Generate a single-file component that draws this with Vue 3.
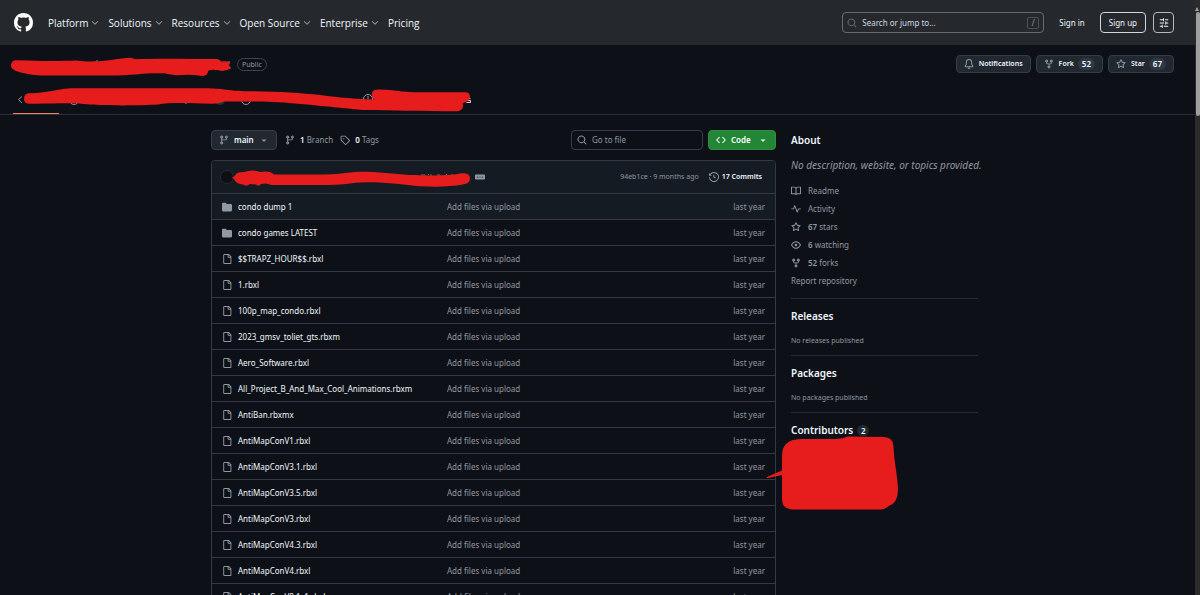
<script setup>
const nav = [
  { label: 'Platform', menu: true },
  { label: 'Solutions', menu: true },
  { label: 'Resources', menu: true },
  { label: 'Open Source', menu: true },
  { label: 'Enterprise', menu: true },
  { label: 'Pricing', menu: false },
]

const files = [
  'condo dump 1',
  'condo games LATEST',
  '$$TRAPZ_HOUR$$.rbxl',
  '1.rbxl',
  '100p_map_condo.rbxl',
  '2023_gmsv_toliet_gts.rbxm',
  'Aero_Software.rbxl',
  'All_Project_B_And_Max_Cool_Animations.rbxm',
  'AntiBan.rbxmx',
  'AntiMapConV1.rbxl',
  'AntiMapConV3.1.rbxl',
  'AntiMapConV3.5.rbxl',
  'AntiMapConV3.rbxl',
  'AntiMapConV4.3.rbxl',
  'AntiMapConV4.rbxl',
  'AntiMapConV8.1_1.rbxl',
].map((name, i) => ({ name, icon: i < 2 ? 'folder' : 'file' }))

const facts = [
  { icon: 'book', text: 'Readme' },
  { icon: 'pulse', text: 'Activity' },
  { icon: 'star', count: '67', text: 'stars' },
  { icon: 'eye', count: '6', text: 'watching' },
  { icon: 'fork', count: '52', text: 'forks' },
]

const icons = {
  github: 'M8 0c4.42 0 8 3.58 8 8a8.013 8.013 0 0 1-5.45 7.59c-.4.08-.55-.17-.55-.38 0-.27.01-1.13.01-2.2 0-.75-.25-1.23-.54-1.48 1.78-.2 3.65-.88 3.65-3.95 0-.88-.31-1.59-.82-2.15.08-.2.36-1.02-.08-2.12 0 0-.67-.22-2.2.82-.64-.18-1.32-.27-2-.27-.68 0-1.36.09-2 .27-1.53-1.03-2.2-.82-2.2-.82-.44 1.1-.16 1.92-.08 2.12-.51.56-.82 1.28-.82 2.15 0 3.06 1.86 3.75 3.64 3.95-.23.2-.44.55-.51 1.07-.46.21-1.61.55-2.33-.66-.15-.24-.6-.83-1.23-.82-.67.01-.27.38.01.53.34.19.73.9.82 1.13.16.45.68 1.31 2.69.94 0 .67.01 1.3.01 1.49 0 .21-.15.45-.55.38A7.995 7.995 0 0 1 0 8c0-4.42 3.58-8 8-8Z',
  chevron: 'M12.78 5.22a.749.749 0 0 1 0 1.06l-4.25 4.25a.749.749 0 0 1-1.06 0L3.22 6.28a.749.749 0 1 1 1.06-1.06L8 8.939l3.72-3.719a.749.749 0 0 1 1.06 0Z',
  search: 'M10.68 11.74a6 6 0 0 1-7.922-8.982 6 6 0 0 1 8.982 7.922l3.04 3.04a.749.749 0 0 1-.326 1.275.749.749 0 0 1-.734-.215ZM11.5 7a4.499 4.499 0 1 0-8.997 0A4.499 4.499 0 0 0 11.5 7Z',
  sliders: 'M15 2.75a.75.75 0 0 1-.75.75h-4a.75.75 0 0 1 0-1.5h4a.75.75 0 0 1 .75.75Zm-8.5.75v1.25a.75.75 0 0 0 1.5 0v-4a.75.75 0 0 0-1.5 0V2H1.75a.75.75 0 0 0 0 1.5H6.5Zm1.25 5.25a.75.75 0 0 0 0-1.5h-6a.75.75 0 0 0 0 1.5h6ZM15 8a.75.75 0 0 1-.75.75H11.5V10a.75.75 0 1 1-1.5 0V6a.75.75 0 0 1 1.5 0v1.25h2.75A.75.75 0 0 1 15 8Zm-9 5.25v-2a.75.75 0 0 0-1.5 0v1.25H1.75a.75.75 0 0 0 0 1.5H4.5v1.25a.75.75 0 0 0 1.5 0v-2Zm9 0a.75.75 0 0 1-.75.75h-6a.75.75 0 0 1 0-1.5h6a.75.75 0 0 1 .75.75Z',
  bell: 'M8 16a2 2 0 0 0 1.985-1.75c.017-.137-.097-.25-.235-.25h-3.5c-.138 0-.252.113-.235.25A2 2 0 0 0 8 16ZM3 5a5 5 0 0 1 10 0v2.947c0 .05.015.098.042.139l1.703 2.555A1.519 1.519 0 0 1 13.482 13H2.518a1.516 1.516 0 0 1-1.263-2.36l1.703-2.554A.255.255 0 0 0 3 7.947Zm5-3.5A3.5 3.5 0 0 0 4.5 5v2.947c0 .346-.102.683-.294.97l-1.703 2.556a.017.017 0 0 0-.003.01l.001.006c0 .002.002.004.004.006l.006.004.007.001h10.964l.007-.001.006-.004.004-.006.001-.007a.017.017 0 0 0-.003-.01l-1.703-2.554a1.745 1.745 0 0 1-.294-.97V5A3.5 3.5 0 0 0 8 1.5Z',
  fork: 'M5 5.372v.878c0 .414.336.75.75.75h4.5a.75.75 0 0 0 .75-.75v-.878a2.25 2.25 0 1 1 1.5 0v.878a2.25 2.25 0 0 1-2.25 2.25h-1.5v2.128a2.251 2.251 0 1 1-1.5 0V8.5h-1.5A2.25 2.25 0 0 1 3.5 6.25v-.878a2.25 2.25 0 1 1 1.5 0ZM5 3.25a.75.75 0 1 0-1.5 0 .75.75 0 0 0 1.5 0Zm6.75.75a.75.75 0 1 0 0-1.5.75.75 0 0 0 0 1.5Zm-3 8.75a.75.75 0 1 0-1.5 0 .75.75 0 0 0 1.5 0Z',
  star: 'M8 .25a.75.75 0 0 1 .673.418l1.882 3.815 4.21.612a.75.75 0 0 1 .416 1.279l-3.046 2.97.719 4.192a.751.751 0 0 1-1.088.791L8 12.347l-3.766 1.98a.75.75 0 0 1-1.088-.79l.72-4.194L.818 6.374a.75.75 0 0 1 .416-1.28l4.21-.611L7.327.668A.75.75 0 0 1 8 .25Zm0 2.445L6.615 5.5a.75.75 0 0 1-.564.41l-3.097.45 2.24 2.184a.75.75 0 0 1 .216.664l-.528 3.084 2.769-1.456a.75.75 0 0 1 .698 0l2.77 1.456-.53-3.084a.75.75 0 0 1 .216-.664l2.24-2.183-3.096-.45a.75.75 0 0 1-.564-.41L8 2.694Z',
  branch: 'M9.5 3.25a2.25 2.25 0 1 1 3 2.122V6A2.5 2.5 0 0 1 10 8.5H6a1 1 0 0 0-1 1v1.128a2.251 2.251 0 1 1-1.5 0V5.372a2.25 2.25 0 1 1 1.5 0v1.836A2.493 2.493 0 0 1 6 7h4a1 1 0 0 0 1-1v-.628A2.25 2.25 0 0 1 9.5 3.25Zm-6 0a.75.75 0 1 0 1.5 0 .75.75 0 0 0-1.5 0Zm8.25-.75a.75.75 0 1 0 0 1.5.75.75 0 0 0 0-1.5ZM4.25 12a.75.75 0 1 0 0 1.5.75.75 0 0 0 0-1.5Z',
  caret: 'm4.427 7.427 3.396 3.396a.25.25 0 0 0 .354 0l3.396-3.396A.25.25 0 0 0 11.396 7H4.604a.25.25 0 0 0-.177.427Z',
  tag: 'M1 7.775V2.75C1 1.784 1.784 1 2.75 1h5.025c.464 0 .91.184 1.238.513l6.25 6.25a1.75 1.75 0 0 1 0 2.474l-5.026 5.026a1.75 1.75 0 0 1-2.474 0l-6.25-6.25A1.752 1.752 0 0 1 1 7.775Zm1.5 0c0 .066.026.13.073.177l6.25 6.25a.25.25 0 0 0 .354 0l5.025-5.025a.25.25 0 0 0 0-.354l-6.25-6.25a.25.25 0 0 0-.177-.073H2.75a.25.25 0 0 0-.25.25ZM6 5a1 1 0 1 1 0 2 1 1 0 0 1 0-2Z',
  code: 'm11.28 3.22 4.25 4.25a.75.75 0 0 1 0 1.06l-4.25 4.25a.749.749 0 0 1-1.275-.326.749.749 0 0 1 .215-.734L13.94 8l-3.72-3.72a.749.749 0 0 1 .326-1.275.749.749 0 0 1 .734.215Zm-6.56 0a.751.751 0 0 1 1.042.018.751.751 0 0 1 .018 1.042L2.06 8l3.72 3.72a.749.749 0 0 1-.326 1.275.749.749 0 0 1-.734-.215L.47 8.53a.75.75 0 0 1 0-1.06Z',
  ellipsis: 'M0 5.75C0 4.784.784 4 1.75 4h12.5c.966 0 1.75.784 1.75 1.75v4.5A1.75 1.75 0 0 1 14.25 12H1.75A1.75 1.75 0 0 1 0 10.25ZM12 7a1 1 0 1 0 0 2 1 1 0 0 0 0-2ZM7 8a1 1 0 1 0 2 0 1 1 0 0 0-2 0ZM4 7a1 1 0 1 0 0 2 1 1 0 0 0 0-2Z',
  history: 'm.427 1.927 1.215 1.215a8.002 8.002 0 1 1-1.6 5.685.75.75 0 1 1 1.493-.154 6.5 6.5 0 1 0 1.18-4.458l1.358 1.358A.25.25 0 0 1 3.896 6H.25A.25.25 0 0 1 0 5.75V2.104a.25.25 0 0 1 .427-.177ZM7.75 4a.75.75 0 0 1 .75.75v2.992l2.028.812a.75.75 0 0 1-.557 1.392l-2.5-1A.751.751 0 0 1 7 8.25v-3.5A.75.75 0 0 1 7.75 4Z',
  folder: 'M1.75 1A1.75 1.75 0 0 0 0 2.75v10.5C0 14.216.784 15 1.75 15h12.5A1.75 1.75 0 0 0 16 13.25v-8.5A1.75 1.75 0 0 0 14.25 3H7.5a.25.25 0 0 1-.2-.1l-.9-1.2C6.07 1.26 5.55 1 5 1H1.75Z',
  file: 'M2 1.75C2 .784 2.784 0 3.75 0h6.586c.464 0 .909.184 1.237.513l2.914 2.914c.329.328.513.773.513 1.237v9.586A1.75 1.75 0 0 1 13.25 16h-9.5A1.75 1.75 0 0 1 2 14.25Zm1.75-.25a.25.25 0 0 0-.25.25v12.5c0 .138.112.25.25.25h9.5a.25.25 0 0 0 .25-.25V6h-2.75A1.75 1.75 0 0 1 9 4.25V1.5Zm6.75.062V4.25c0 .138.112.25.25.25h2.688l-.011-.013-2.914-2.914-.013-.011Z',
  book: 'M0 1.75A.75.75 0 0 1 .75 1h4.253c1.227 0 2.317.59 3 1.501A3.743 3.743 0 0 1 11.006 1h4.245a.75.75 0 0 1 .75.75v10.5a.75.75 0 0 1-.75.75h-4.507a2.25 2.25 0 0 0-1.591.659l-.622.621a.75.75 0 0 1-1.06 0l-.622-.621A2.25 2.25 0 0 0 5.258 13H.75a.75.75 0 0 1-.75-.75Zm7.251 10.324.004-5.073-.002-2.253A2.25 2.25 0 0 0 5.003 2.5H1.5v9h3.757a3.75 3.75 0 0 1 1.994.574ZM8.755 4.75l-.004 7.322a3.752 3.752 0 0 1 1.992-.572H14.5v-9h-3.495a2.25 2.25 0 0 0-2.25 2.25Z',
  pulse: 'M6 2c.306 0 .582.187.696.471L10 10.731l1.304-3.26A.751.751 0 0 1 12 7h3.25a.75.75 0 0 1 0 1.5h-2.742l-1.812 4.528a.751.751 0 0 1-1.392 0L6 4.77 4.696 8.03A.75.75 0 0 1 4 8.5H.75a.75.75 0 0 1 0-1.5h2.742l1.812-4.529A.751.751 0 0 1 6 2Z',
  eye: 'M8 2c1.981 0 3.671.992 4.933 2.078 1.27 1.091 2.187 2.345 2.637 3.023a1.62 1.62 0 0 1 0 1.798c-.45.678-1.367 1.932-2.637 3.023C11.67 13.008 9.981 14 8 14c-1.981 0-3.671-.992-4.933-2.078C1.797 10.83.88 9.576.43 8.898a1.62 1.62 0 0 1 0-1.798c.45-.677 1.367-1.931 2.637-3.022C4.33 2.992 6.019 2 8 2ZM1.679 7.932a.12.12 0 0 0 0 .136c.411.622 1.241 1.75 2.366 2.717C5.176 11.758 6.527 12.5 8 12.5c1.473 0 2.825-.742 3.955-1.715 1.124-.967 1.954-2.096 2.366-2.717a.12.12 0 0 0 0-.136c-.412-.621-1.242-1.75-2.366-2.717C10.824 4.242 9.473 3.5 8 3.5c-1.473 0-2.825.742-3.955 1.715-1.124.967-1.954 2.096-2.366 2.717ZM8 10a2 2 0 1 1-.001-3.999A2 2 0 0 1 8 10Z',
}
</script>

<template>
  <div class="page">
    <header class="topbar">
      <a href="#" class="logo" aria-label="Homepage"><svg viewBox="0 0 16 16"><path :d="icons.github" /></svg></a>
      <nav class="nav" aria-label="Global">
        <template v-for="n in nav" :key="n.label">
          <button v-if="n.menu" type="button">{{ n.label }}<svg class="icon chev" viewBox="0 0 16 16"><path :d="icons.chevron" /></svg></button>
          <a v-else href="#">{{ n.label }}</a>
        </template>
      </nav>
      <label class="search">
        <svg class="icon" viewBox="0 0 16 16"><path :d="icons.search" /></svg>
        <input type="text" placeholder="Search or jump to..." aria-label="Search or jump to" />
        <kbd>/</kbd>
      </label>
      <a href="#" class="signin">Sign in</a>
      <a href="#" class="signup">Sign up</a>
      <button type="button" class="appearance" aria-label="Appearance settings"><svg class="icon" viewBox="0 0 16 16"><path :d="icons.sliders" /></svg></button>
    </header>

    <section class="repo-head">
      <div class="title-row">
        <span class="visibility">Public</span>
        <div class="actions">
          <button type="button" class="btn small"><svg class="icon" viewBox="0 0 16 16"><path :d="icons.bell" /></svg>Notifications</button>
          <button type="button" class="btn small"><svg class="icon" viewBox="0 0 16 16"><path :d="icons.fork" /></svg>Fork<span class="counter">52</span></button>
          <button type="button" class="btn small"><svg class="icon" viewBox="0 0 16 16"><path :d="icons.star" /></svg>Star<span class="counter">67</span></button>
        </div>
      </div>
      <nav class="tabs" aria-label="Repository">
        <a href="#" class="tab" aria-label="Code" aria-current="page"></a>
      </nav>
      <svg class="marks head-marks" viewBox="0 45 480 70" aria-hidden="true">
        <g fill="none" stroke="#9198a1" stroke-width="1">
          <path d="M22 96.500L18.500 99.500L22 103" />
          <circle cx="368" cy="99" r="4.500" /><path d="M368 96v3" />
          <circle cx="246" cy="100" r="4.500" />
          <circle cx="74" cy="100" r="4.500" />
          <path d="M303 103.500h4M186 102v2" />
          <path d="M467 98.500h3.500M467 100.500h3.500v2h-4" stroke="#d1d7e0" />
        </g>
        <circle cx="220" cy="100" r="5" fill="#2a313c" />
        <path d="M229 61v3M230.500 68h-2M97 60v2" fill="none" stroke="#4493f8" />
        <path class="ink" d="M11 66C11 62 13 60.300 17 60.300C45 61.500 65 61 76 60.500C88 62 98 61.500 106 60.500C116 59.500 122 58 129 57.700Q134 57.500 134 59.300C160 58 190 59 216 59Q220 59 221 61.500Q227 60.500 230 62.500L229 65L231 68Q227 71 222 71L217 70Q208 69 208 72Q207 76 202 76Q190 74 177 75.300C170 75 168 73.500 162 73.300C145 72.500 130 76 105 75.500H43C30 75 11 72 11 66Z" />
        <path class="ink" d="M24 99Q24 93.500 29 93.300C50 93 58 88.500 74 88.300H206C222 88.500 226 90.500 245 91.200C275 91.200 300 93 320 95C340 97.500 355 99 374 99.500Q370 95 373 91Q375 89 380 89.500C395 90 402 92 415 92.200H465Q470 92 470 97Q470 101 463 103V107Q462 111 456 111.300C425 111 390 110.500 363 110C338 108 300 103 273 102C250 101 235 101.500 224 101.500Q218 104 211 103.700C190 103 170 102 158 104.500C140 105.500 105 106 83 104C70 102.500 50 104 30 103.700Q24 104 24 99Z" />
      </svg>
    </section>

    <main class="main">
      <div class="files">
        <div class="toolbar">
          <button type="button" class="btn branch"><svg class="icon" viewBox="0 0 16 16"><path :d="icons.branch" /></svg>main<svg class="icon" viewBox="0 0 16 16"><path :d="icons.caret" /></svg></button>
          <a href="#" class="stat branches"><svg class="icon" viewBox="0 0 16 16"><path :d="icons.branch" /></svg><span><b>1</b> Branch</span></a>
          <a href="#" class="stat"><svg class="icon" viewBox="0 0 16 16"><path :d="icons.tag" /></svg><span><b>0</b> Tags</span></a>
          <label class="goto">
            <svg class="icon" viewBox="0 0 16 16"><path :d="icons.search" /></svg>
            <input type="text" placeholder="Go to file" aria-label="Go to file" />
          </label>
          <button type="button" class="btn code"><svg class="icon" viewBox="0 0 16 16"><path :d="icons.code" /></svg>Code<svg class="icon" viewBox="0 0 16 16"><path :d="icons.caret" /></svg></button>
        </div>

        <div class="box">
          <div class="commit">
            <span class="avatar"></span>
            <button type="button" class="more" aria-label="Open commit details"><svg class="icon" viewBox="0 0 16 16"><path :d="icons.ellipsis" /></svg></button>
            <span class="sha">94eb1ce · 9 months ago</span>
            <a href="#" class="commits"><svg class="icon" viewBox="0 0 16 16"><path :d="icons.history" /></svg>17 Commits</a>
            <svg class="marks commit-marks" viewBox="230 168 245 20" aria-hidden="true">
              <path d="M421 175h4M428 174.500h1M431 174v2M437 175h3M446 174.500h1M452 174v2" fill="none" stroke="#6a717b" />
              <path class="ink" d="M232 177.500L235 176Q236 172.500 241 172.300C246 172 249 170.300 254 170.500L261 172Q270 170.500 274 174.500H325C342 174 350 171.700 366 171.700C385 172 400 175 415 175C435 176 450 175.500 462 173.300Q470 173 470 178.500Q470 183 464 184.300C450 187 435 187 420 186.300C405 185 390 182.300 367 182.300C350 182.500 345 185 330 185H272L266 183.500L261 184Q259 187 256 184.500L250 184Q246 187 243 184.500Q236 184 234 179Z" />
            </svg>
          </div>
          <table>
            <tbody>
              <tr v-for="f in files" :key="f.name">
                <td class="name"><a href="#"><svg class="icon" viewBox="0 0 16 16"><path :d="icons[f.icon]" /></svg>{{ f.name }}</a></td>
                <td class="msg"><a href="#">Add files via upload</a></td>
                <td class="date">last year</td>
              </tr>
            </tbody>
          </table>
        </div>
      </div>

      <aside class="side">
        <section class="about">
          <h2>About</h2>
          <p class="desc">No description, website, or topics provided.</p>
          <ul>
            <li v-for="f in facts" :key="f.text">
              <a href="#"><svg class="icon" viewBox="0 0 16 16"><path :d="icons[f.icon]" /></svg><span><b v-if="f.count">{{ f.count }}</b>{{ f.count ? ' ' : '' }}{{ f.text }}</span></a>
            </li>
            <li><a href="#">Report repository</a></li>
          </ul>
        </section>
        <section class="block">
          <h2>Releases</h2>
          <p>No releases published</p>
        </section>
        <section class="block">
          <h2>Packages</h2>
          <p>No packages published</p>
        </section>
        <section class="block contributors">
          <h2>Contributors <span class="counter round">2</span></h2>
          <svg class="marks blob" viewBox="764 434 136 78" aria-hidden="true">
            <path class="ink" d="M782 456Q782 439.500 800 439H836Q843 438.500 848 436.500L884 437Q893 437.500 893.500 446C894 462 898 478 898 490Q898 503 888 506.500Q885 509.500 880 509.500H794Q782 509.500 782 499V475L768 478Q765 478 768 476.500L782 470.500Z" />
          </svg>
        </section>
      </aside>
    </main>

    <div class="scrollbar" aria-hidden="true"><i class="up"></i><i class="thumb"></i></div>
  </div>
</template>

<style>
html,
body {
  background: #0d1117;
}
</style>

<style scoped>
* {
  box-sizing: border-box;
}
.page {
  position: relative;
  height: 100vh;
  overflow: hidden;
  padding-right: 5px;
  color: #f0f6fc;
  background: #0d1117;
  font: 8px/14px "Noto Sans", "Open Sans", sans-serif;
}
a {
  color: inherit;
  text-decoration: none;
}
button,
input {
  font: inherit;
  color: inherit;
  padding: 0;
  border: 0;
  background: none;
}
h2,
p,
ul {
  margin: 0;
  padding: 0;
  list-style: none;
}
b,
h2 {
  font-weight: 600;
}
.icon {
  flex: none;
  width: 10px;
  height: 10px;
  fill: #9198a1;
}
.marks {
  position: absolute;
  pointer-events: none;
}
.ink {
  fill: #e71d1d;
}

.topbar {
  display: flex;
  align-items: center;
  height: 45px;
  padding: 0 21px 0 14px;
  background: #25292e;
}
.logo svg {
  display: block;
  width: 19px;
  height: 19px;
  fill: #fff;
}
.nav {
  display: flex;
  gap: 8px;
  margin-left: 15px;
  font-family: "Open Sans", "Noto Sans", sans-serif;
  font-size: 10px;
}
.nav button {
  display: flex;
  align-items: center;
  gap: 2px;
}
.search {
  display: flex;
  align-items: center;
  gap: 5px;
  width: 202px;
  height: 21px;
  margin-left: auto;
  padding: 0 4px;
  border: 1px solid #656c76;
  border-radius: 4px;
}
.search .icon {
  fill: #656c76;
}
.search input,
.goto input {
  flex: 1;
  min-width: 0;
  outline: 0;
}
.search input::placeholder {
  color: #d1d7e0;
  opacity: 1;
}
kbd {
  width: 12px;
  height: 12px;
  border: 1px solid #4a515b;
  border-radius: 2px;
  color: #9198a1;
  font: 8px/10px "Noto Sans", sans-serif;
  text-align: center;
}
.signin {
  margin: 0 15px;
}
.signup {
  padding: 2px 8px;
  height: 21px;
  line-height: 16px;
  border: 1px solid #d1d7e0;
  border-radius: 4px;
}
.appearance {
  display: grid;
  place-items: center;
  width: 21px;
  height: 21px;
  margin-left: 7px;
  border: 1px solid #b4bac2;
  border-radius: 4px;
}
.appearance .icon {
  fill: #f0f6fc;
}

.repo-head {
  position: relative;
  height: 70px;
  border-bottom: 1px solid #2b3038;
}
.title-row {
  display: flex;
  align-items: center;
  justify-content: space-between;
  padding: 10px 21px 0 237px;
}
.visibility {
  padding: 0 4px;
  border: 1px solid #3d444d;
  border-radius: 8px;
  color: #9198a1;
  font-size: 7px;
  line-height: 11px;
}
.actions {
  display: flex;
  gap: 5px;
}
.btn {
  display: flex;
  align-items: center;
  border: 1px solid #363d46;
  border-radius: 4px;
  background: #212830;
  font-weight: 600;
}
.small {
  height: 18px;
  padding: 0 7px;
  gap: 4px;
  font-size: 7px;
}
.small .icon {
  margin-right: 1px;
}
.counter {
  padding: 0 4px;
  border-radius: 8px;
  background: #2f3742;
  line-height: 12px;
  font-size: 8px;
}
.tabs {
  position: absolute;
  left: 13px;
  bottom: 0;
}
.tab {
  display: block;
  width: 46px;
  height: 26px;
  border-bottom: 1px solid #f78166;
}
.head-marks {
  left: 0;
  top: 0;
  width: 480px;
  height: 70px;
}

.main {
  display: grid;
  grid-template-columns: minmax(0, 1fr) 187px;
  gap: 15px;
  max-width: 773px;
  margin: 15px auto 0;
  padding-right: 6px;
}
.toolbar {
  display: flex;
  align-items: center;
  height: 20px;
}
.toolbar .btn {
  height: 20px;
}
.branch {
  width: 66px;
  padding: 0 7px;
  gap: 5px;
}
.branch .icon:last-child,
.code .icon:last-child {
  margin-left: auto;
}
.stat {
  display: flex;
  align-items: center;
  gap: 5px;
  margin-left: 7px;
  color: #9198a1;
}
.stat b {
  color: #f0f6fc;
}
.branches {
  margin-left: 8px;
}
.goto {
  display: flex;
  align-items: center;
  gap: 5px;
  width: 132px;
  height: 20px;
  margin-left: auto;
  padding: 0 5px;
  border: 1px solid #363d46;
  border-radius: 4px;
}
.goto input::placeholder {
  color: #9198a1;
  opacity: 1;
}
.code {
  width: 68px;
  margin-left: 5px;
  padding: 0 7px;
  gap: 5px;
  color: #fff;
  background: #238636;
  border-color: #2f9040;
}
.code .icon {
  fill: #fff;
}
.box {
  margin-top: 10px;
  border: 1px solid #343a43;
  border-radius: 4px;
}
.commit {
  position: relative;
  display: flex;
  align-items: center;
  height: 32px;
  padding: 0 13px 0 8px;
  background: #151b23;
  border-radius: 3px 3px 0 0;
}
.avatar {
  width: 14px;
  height: 14px;
  border: 1px solid #262c34;
  border-radius: 50%;
  background: #0d0f12;
}
.more {
  display: flex;
  margin-left: 241px;
}
.sha {
  margin-left: auto;
  color: #9198a1;
  font-size: 7px;
}
.commits {
  display: flex;
  align-items: center;
  gap: 3px;
  margin-left: 10px;
  font-size: 7px;
  font-weight: 600;
}
.commit-marks {
  left: 18px;
  top: 7px;
  width: 245px;
  height: 20px;
}
table {
  width: 100%;
  table-layout: fixed;
  border-collapse: collapse;
}
td {
  height: 26px;
  padding: 0;
  border-top: 1px solid #343a43;
  color: #9198a1;
  white-space: nowrap;
}
tr:first-child td {
  background: #151b23;
}
.name {
  width: 235px;
  padding-left: 10px;
  color: #f0f6fc;
}
.name a {
  display: flex;
  align-items: center;
  gap: 6px;
}
.date {
  width: 80px;
  padding-right: 10px;
  text-align: right;
}

.side h2 {
  font-size: 10px;
  line-height: 14px;
}
.about {
  padding-top: 3px;
  color: #9198a1;
}
.about h2 {
  color: #f0f6fc;
}
.desc {
  margin: 11px 0 9px;
  font-size: 10px;
  font-style: italic;
  line-height: 15px;
  white-space: nowrap;
}
.about li {
  height: 18px;
  line-height: 18px;
}
.about li a {
  display: flex;
  align-items: center;
  gap: 7px;
}
.block {
  position: relative;
  margin-top: 8px;
  padding-top: 10px;
  border-top: 1px solid #252b33;
}
.block p {
  margin-top: 11px;
  color: #9198a1;
  font-size: 7px;
  line-height: 13px;
}
.round {
  margin-left: 1px;
  background: #212830;
}
.blob {
  left: -27px;
  top: 21px;
  width: 136px;
  height: 78px;
}

.scrollbar {
  position: absolute;
  top: 0;
  right: 0;
  width: 5px;
  height: 100%;
  background: #2b2b2b;
}
.up {
  display: block;
  height: 8px;
  margin-top: 3px;
  width: 0;
  border: solid transparent;
  border-width: 0 2px 4px;
  border-bottom-color: #9f9f9f;
}
.thumb {
  display: block;
  height: 104px;
  margin: 1px 0 0 1px;
  border-radius: 2px;
  background: #9f9f9f;
}
</style>
